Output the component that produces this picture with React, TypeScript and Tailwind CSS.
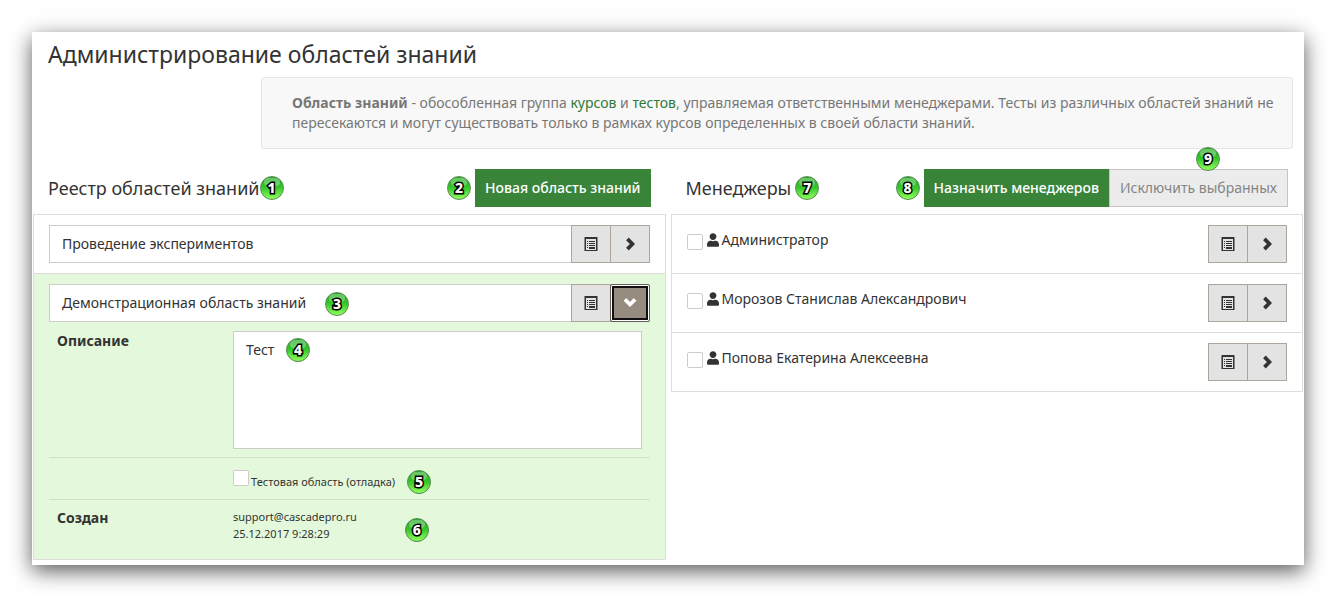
import { useState } from 'react'
import type { ReactNode } from 'react'
import clsx from 'clsx'
import { FaUser } from 'react-icons/fa'

const MANAGERS = [
  'Администратор',
  'Морозов Станислав Александрович',
  'Попова Екатерина Алексеевна',
]

function ListIcon() {
  return (
    <svg viewBox="0 0 14 14" className="size-3.5" fill="currentColor" aria-hidden="true">
      <path fillRule="evenodd" d="M.5 0h13v14H.5zM2 2v11h10V2z" />
      <path d="M3 4h1v1H3zM5 4h6v1H5zM3 6h1v1H3zM5 6h6v1H5zM3 8h1v1H3zM5 8h6v1H5zM3 10h1v1H3zM5 10h6v2H5z" />
    </svg>
  )
}

function Chevron({ down = false }: { down?: boolean }) {
  return (
    <svg viewBox="0 0 14 14" className={clsx('size-3.5', down && 'rotate-90')} fill="currentColor" aria-hidden="true">
      <path d="M5.7.6 12 7 5.7 13.4 3.1 10.8 6.9 7 3.1 3.2z" />
    </svg>
  )
}

function Badge({ n, className }: { n: number; className?: string }) {
  return (
    <span
      className={clsx(
        'size-6 shrink-0 rounded-full border border-[#5c8a55] bg-linear-to-b from-[#22a822] via-[#35c92c] to-[#8cff5c]',
        'flex items-center justify-center overflow-hidden pointer-events-none',
        className,
      )}
    >
      <span className="absolute mb-3 h-2 w-4 rounded-full bg-white/30" />
      <span className="relative text-sm leading-none font-extrabold text-white [-webkit-text-stroke:3px_black] [paint-order:stroke_fill]">
        {n}
      </span>
    </span>
  )
}

function IconButton({ label, active, onClick, children }: {
  label: string
  active?: boolean
  onClick?: () => void
  children: ReactNode
}) {
  return (
    <button
      type="button"
      aria-label={label}
      onClick={onClick}
      className={clsx(
        '-ml-px flex h-[38px] w-10 shrink-0 items-center justify-center border',
        active
          ? 'border-[#645c54] bg-[#968c80] pb-0.5 text-white ring-1 ring-inset ring-white outline-2 -outline-offset-4 outline-[#101010] rounded-xs'
          : 'border-[#ada59b] bg-[#e3e3e3] text-[#333]',
      )}
    >
      {children}
    </button>
  )
}

function CheckBox({ id, className }: { id: string; className?: string }) {
  return (
    <input
      id={id}
      type="checkbox"
      className={clsx('size-4 shrink-0 appearance-none rounded-xs border border-[#ccc] bg-white checked:bg-[#398439]', className)}
    />
  )
}

function AreaField({ value, open, onToggle, badge }: {
  value: string
  open: boolean
  onToggle?: () => void
  badge?: ReactNode
}) {
  return (
    <div className="relative flex">
      <input
        type="text"
        aria-label="Название области знаний"
        defaultValue={value}
        className="h-[38px] min-w-0 flex-1 border border-[#ccc] bg-white px-3 pb-0.5 text-sm"
      />
      <IconButton label="Карточка области"><ListIcon /></IconButton>
      <IconButton label="Подробнее" active={open} onClick={onToggle}><Chevron down={open} /></IconButton>
      {badge}
    </div>
  )
}

function AreaDetails() {
  return (
    <table className="mt-px w-full table-fixed text-left text-sm leading-5">
      <tbody className="divide-y divide-[#d5dfd0]">
        <tr>
          <th className="w-44 p-2 align-top font-bold"><label htmlFor="description">Описание</label></th>
          <td className="p-2">
            <div className="relative">
              <textarea
                id="description"
                defaultValue="Тест"
                className="block h-[118px] w-full resize-none border border-[#ccc] bg-white px-3 py-2"
              />
              <Badge n={4} className="absolute left-[53px] top-[7px]" />
            </div>
          </td>
        </tr>
        <tr>
          <th />
          <td className="px-2 pt-3 pb-[5px]">
            <div className="flex items-start text-[11px]">
              <CheckBox id="debug" />
              <label htmlFor="debug" className="ml-0.5 flex h-6 items-center">Тестовая область (отладка)</label>
              <Badge n={5} className="relative ml-3" />
            </div>
          </td>
        </tr>
        <tr>
          <th className="p-2 align-top font-bold">Создан</th>
          <td className="p-2">
            <div className="flex items-end gap-12 text-[11px] leading-[17px]">
              <div>support@cascadepro.ru<br />25.12.2017 9:28:29</div>
              <Badge n={6} className="relative" />
            </div>
          </td>
        </tr>
      </tbody>
    </table>
  )
}

export default function App() {
  const [open, setOpen] = useState(true)

  return (
    <div className="p-8 bg-white font-['Noto_Sans','Liberation_Sans',sans-serif] text-[#333]">
      <main className="px-px pb-[5px] bg-white shadow-[0_6px_20px_rgba(0,0,0,0.65)]">
        <h1 className="h-[45px] px-[15px] text-[23px] leading-[44px]">Администрирование областей знаний</h1>

        <p className="ml-57 mr-2.5 rounded-[3px] border border-[#e5e5e5] bg-[#f8f8f8] py-[15px] pl-[30px] pr-4 text-sm leading-5 text-[#777]">
          <b>Область знаний</b> - обособленная группа <a href="#courses" className="text-[#2f7a35]">курсов</a> и{' '}
          <a href="#tests" className="text-[#2f7a35]">тестов</a>, управляемая ответственными менеджерами. Тесты из
          различных областей знаний не пересекаются и могут существовать только в рамках курсов определенных в своей
          области знаний.
        </p>

        <div className="mt-5 grid grid-cols-2 items-start gap-[5px]">
          {/* Knowledge areas */}
          <section>
            <header className="mb-[7px] flex h-[38px] items-center px-[15px]">
              <h2 className="text-lg">Реестр областей знаний</h2>
              <Badge n={1} className="relative" />
              <Badge n={2} className="relative ml-auto mr-1" />
              <button type="button" className="h-[38px] bg-[#398439] px-2.5 text-sm font-medium text-white">
                Новая область знаний
              </button>
            </header>

            <ul className="border border-[#ddd]">
              <li className="px-[15px] py-2.5">
                <AreaField value="Проведение экспериментов" open={false} />
              </li>
              <li className="border-t border-[#ddd] bg-[#e4f9db] px-[15px] pt-2.5 pb-[9px]">
                <AreaField
                  value="Демонстрационная область знаний"
                  open={open}
                  onToggle={() => setOpen(!open)}
                  badge={<Badge n={3} className="absolute left-69 top-2" />}
                />
                {open && <AreaDetails />}
              </li>
            </ul>
          </section>

          {/* Managers */}
          <section>
            <header className="relative mb-[7px] flex h-[38px] items-center px-[15px]">
              <h2 className="text-lg">Менеджеры</h2>
              <Badge n={7} className="relative ml-1" />
              <Badge n={8} className="relative ml-auto mr-1" />
              <button type="button" className="h-[38px] bg-[#398439] px-2.5 text-sm font-medium text-white">
                Назначить менеджеров
              </button>
              <button type="button" disabled className="h-[38px] border border-[#c9c3bc] bg-[#ececec] px-2.5 text-sm text-[#858585]">
                Исключить выбранных
              </button>
              <Badge n={9} className="absolute right-[83px] -top-[22px]" />
            </header>

            <ul className="divide-y divide-[#ddd] border border-[#ddd]">
              {MANAGERS.map((name, i) => (
                <li key={name} className="flex items-start px-[15px] py-2.5">
                  <CheckBox id={`manager-${i}`} className="mt-[9px]" />
                  <label htmlFor={`manager-${i}`} className="ml-1 mt-[5px] flex items-center gap-[3px] text-sm">
                    <FaUser className="h-3.5 w-3 shrink-0" />
                    {name}
                  </label>
                  <div className="ml-auto flex">
                    <IconButton label="Карточка менеджера"><ListIcon /></IconButton>
                    <IconButton label="Подробнее"><Chevron /></IconButton>
                  </div>
                </li>
              ))}
            </ul>
          </section>
        </div>
      </main>
    </div>
  )
}
